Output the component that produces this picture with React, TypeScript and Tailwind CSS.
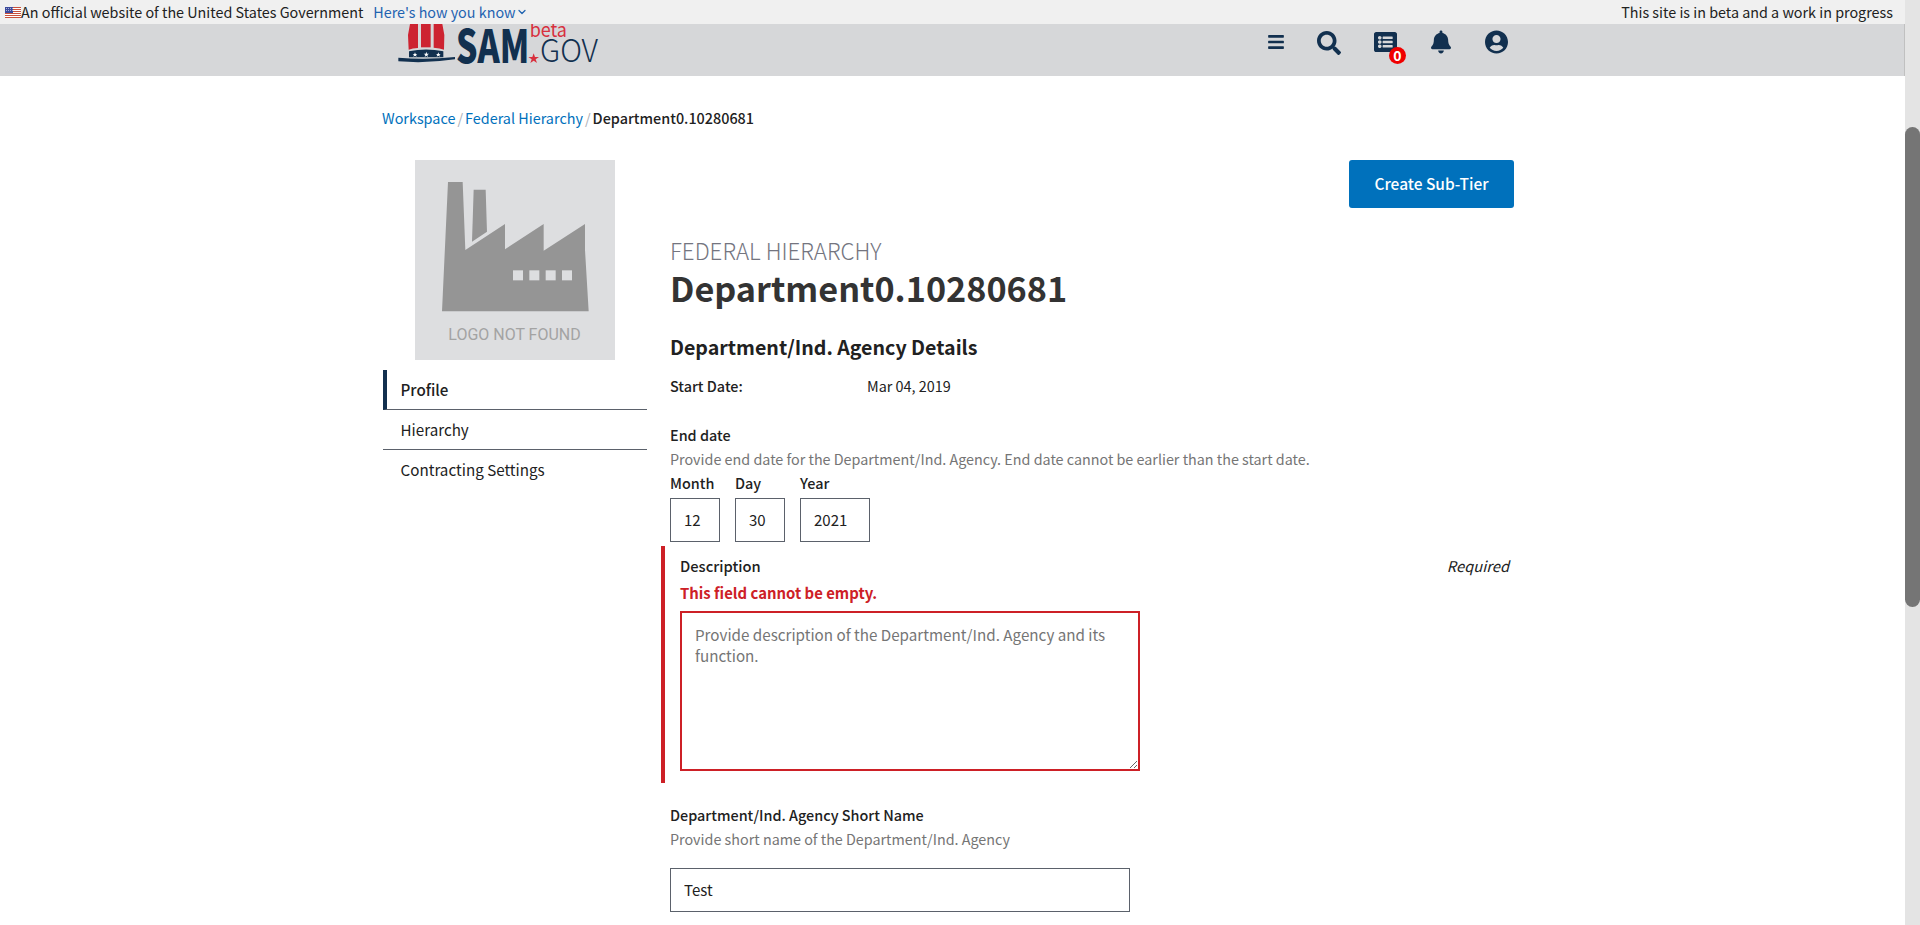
import { FaBars, FaSearch, FaListAlt, FaBell, FaUserCircle } from "react-icons/fa";
import { ChevronDown } from "lucide-react";

function Flag() {
  return (
    <svg viewBox="0 0 16 11" className="w-4 h-[11px] shrink-0">
      <rect width="16" height="11" fill="#fff" />
      {[0, 2, 4, 6, 8, 10].map((y) => (
        <rect key={y} y={y} width="16" height="1" fill="#c8503c" />
      ))}
      <rect width="8" height="6" fill="#3c4a9c" />
      {[1, 3, 5, 7].map((x) => (
        <g key={x}>
          <rect x={x} y="1" width="0.8" height="0.8" fill="#e8e8f8" />
          <rect x={x} y="3" width="0.8" height="0.8" fill="#e8e8f8" />
        </g>
      ))}
    </svg>
  );
}

function Logo() {
  return (
    <svg viewBox="18 27 612 129" className="w-[204px] h-[43px] shrink-0">
      <path d="M60 27H84V99Q68 100 56 104L54 60Z" fill="#cd2331" />
      <path d="M93 27H122V97H93Z" fill="#cd2331" />
      <path d="M131 27H157L163 60L162 104Q150 99 131 98Z" fill="#cd2331" />
      <path d="M57 109Q108 98 160 109V127H57Z" fill="#12304f" />
      <path d="M25 128Q110 135 195 126V133Q110 146 25 139Z" fill="#12304f" />
      <polygon points="75,112 77,117 82,117 78,120 80,125 75,122 70,125 72,120 68,117 73,117" fill="#fff" />
      <polygon points="109,110 111,116 117,116 112,120 114,126 109,122 104,126 106,120 101,116 107,116" fill="#fff" />
      <polygon points="145,112 147,117 152,117 148,120 150,125 145,122 140,125 142,120 138,117 143,117" fill="#fff" />
      <text x="198" y="145" fontSize="136" fontWeight="900" fill="#12304f" textLength="220" lengthAdjust="spacingAndGlyphs" fontFamily="'Noto Sans CJK SC', sans-serif">SAM</text>
      <text x="450" y="140" fontSize="94" fontWeight="300" fill="#12304f" textLength="174" lengthAdjust="spacingAndGlyphs" fontFamily="'Noto Sans CJK SC', sans-serif">GOV</text>
      <text x="419" y="65" fontSize="58" fontWeight="400" fill="#d8303e" textLength="112" lengthAdjust="spacingAndGlyphs" fontFamily="'Noto Sans CJK SC', sans-serif">beta</text>
      <polygon points="431,115 435,126 447,126 437,133 441,144 431,137 421,144 425,133 415,126 427,126" fill="#d8303e" />
    </svg>
  );
}

function Factory() {
  return (
    <svg viewBox="135 30 600 600" className="w-[200px] h-[200px]">
      <rect x="135" y="30" width="600" height="600" fill="#dddee0" />
      <polygon points="234,96 278,96 286,300 405,222 405,298 521,222 521,302 645,222 645,300 656,484 216,484" fill="#959595" />
      <polygon points="311,119 347,119 351,245 306,275" fill="#959595" />
      {[429, 478, 527, 576].map((x) => (
        <rect key={x} x={x} y="361" width="30" height="30" fill="#dddee0" />
      ))}
      <text x="235" y="569" fontSize="50" fill="#a3a3a3" textLength="397" lengthAdjust="spacingAndGlyphs" fontFamily="Roboto, sans-serif">LOGO NOT FOUND</text>
    </svg>
  );
}

function DateField({ label, value, w }: { label: string; value: string; w: string }) {
  return (
    <div className="flex flex-col">
      <span className="text-[14.4px] leading-[22px] font-medium text-[#212121]">{label}</span>
      <input
        readOnly
        value={value}
        className={`${w} h-[44px] mt-[4px] border border-[#5b616b] px-[13px] pb-[1px] text-[15px] text-[#212121] outline-none`}
      />
    </div>
  );
}

export default function App() {
  return (
    <div className="flex h-[925px] w-full overflow-hidden bg-white text-[#212121] font-['Noto_Sans_CJK_SC','Liberation_Sans',sans-serif]">
      <div className="flex-1 min-w-0 flex flex-col">
        <div className="h-[24px] bg-[#f0f0f0] flex items-center pl-[5px] pr-[12px] text-[14.35px] shrink-0">
          <Flag />
          <span>An official website of the United States Government</span>
          <span className="ml-[10px] text-[#1f63b0]">Here's how you know</span>
          <ChevronDown className="text-[#1f63b0] w-[12px] h-[12px]" strokeWidth={2.5} />
          <span className="ml-auto">This site is in beta and a work in progress</span>
        </div>

        <div className="h-[52px] bg-[#d6d7d9] flex items-start pl-[396px] shrink-0 border-r border-[#c0c0c0] text-[#12304f]">
          <Logo />
          <FaBars className="w-[16px] h-[18px] ml-[668px] mt-[9px]" />
          <FaSearch className="w-[24px] h-[24px] ml-[33px] mt-[7px]" />
          <div className="relative ml-[33px] mt-[6px]">
            <FaListAlt className="w-[23px] h-[24px]" />
            <span className="absolute left-[15px] top-[17px] w-[17px] h-[17px] rounded-full bg-[#f00000] text-white text-[14px] leading-[17px] font-bold text-center">0</span>
          </div>
          <FaBell className="w-[20px] h-[24px] ml-[34px] mt-[6px]" />
          <FaUserCircle className="w-[23px] h-[24px] ml-[34px] mt-[6px]" />
        </div>

        <div className="pl-[382px] pt-[31px] flex-1 min-h-0 overflow-hidden">
          <div className="text-[14.4px] leading-[22px] h-[22px] flex items-center">
            <span className="text-[#0071bc]">Workspace</span>
            <span className="mx-[2px] text-[#aeb0b5]">/</span>
            <span className="text-[#0071bc]">Federal Hierarchy</span>
            <span className="mx-[2px] text-[#aeb0b5]">/</span>
            <span className="font-medium">Department0.10280681</span>
          </div>

          <div className="flex mt-[31px]">
            <div className="w-[265px] shrink-0">
              <div className="pl-[33px]">
                <Factory />
              </div>
              <div className="mt-[10px] text-[15.2px] ml-px">
                <div className="h-[40px] flex items-center pl-[13.5px] pb-[1px] border-l-4 border-b border-l-[#12304f] border-b-[#5b616b] font-medium">Profile</div>
                <div className="h-[40px] flex items-center pl-[17.5px] pb-[1px] border-b border-[#5b616b]">Hierarchy</div>
                <div className="h-[40px] flex items-center pl-[17.5px] pb-[2px]">Contracting Settings</div>
              </div>
            </div>

            <div className="ml-[23px] w-[844px] shrink-0 flex flex-col">
              <div className="flex justify-end">
                <button className="w-[165px] h-[48px] rounded-[3px] bg-[#0071bc] text-white text-[15.5px] font-medium">Create Sub-Tier</button>
              </div>
              <div className="mt-[27px] text-[22.3px] leading-[30px] font-extralight text-[#74757f]">FEDERAL HIERARCHY</div>
              <h1 className="text-[34.2px] leading-[44px] font-bold text-[#333333]">Department0.10280681</h1>
              <h2 className="mt-[23px] text-[19.6px] leading-[30px] font-bold text-[#212121]">Department/Ind. Agency Details</h2>
              <div className="mt-[13px] flex text-[14.4px] leading-[22px]">
                <span className="w-[197px] font-medium">Start Date:</span>
                <span>Mar 04, 2019</span>
              </div>

              <div className="mt-[27px] text-[14.4px] leading-[22px] font-medium">End date</div>
              <div className="mt-[2px] text-[14.35px] leading-[22px] text-[#757575]">Provide end date for the Department/Ind. Agency. End date cannot be earlier than the start date.</div>
              <div className="mt-[2px] flex gap-[15px]">
                <DateField label="Month" value="12" w="w-[50px]" />
                <DateField label="Day" value="30" w="w-[50px]" />
                <DateField label="Year" value="2021" w="w-[70px]" />
              </div>

              <div className="-ml-[9px] mt-[4px] border-l-4 border-[#cd2026] pl-[15px] h-[237px] pt-[9px] pr-[5px]">
                <div className="flex justify-between text-[14.7px] leading-[22px]">
                  <span className="font-medium">Description</span>
                  <span className="italic text-[#212121]">Required</span>
                </div>
                <div className="mt-[5px] text-[14.9px] leading-[22px] font-bold text-[#cd2026]">This field cannot be empty.</div>
                <textarea
                  readOnly
                  placeholder="Provide description of the Department/Ind. Agency and its function."
                  className="block mt-[7px] w-[460px] h-[160px] border-2 border-[#cd2026] pl-[13px] pr-[13px] pt-[11px] text-[15.2px] leading-[21px] outline-none placeholder:text-[#757575] resize"
                />
              </div>

              <div className="mt-[21px] text-[14.4px] leading-[22px] font-medium">Department/Ind. Agency Short Name</div>
              <div className="mt-[2px] text-[14.35px] leading-[22px] text-[#757575]">Provide short name of the Department/Ind. Agency</div>
              <input
                readOnly
                value="Test"
                className="mt-[18px] w-[460px] h-[44px] border border-[#5b616b] px-[13px] pb-[1px] text-[15px] outline-none shrink-0"
              />
            </div>
          </div>
        </div>
      </div>

      <div className="w-[15px] shrink-0 bg-[#e4e4e4]">
        <div className="mt-[127px] h-[480px] rounded-full bg-[#757575]" />
      </div>
    </div>
  );
}
